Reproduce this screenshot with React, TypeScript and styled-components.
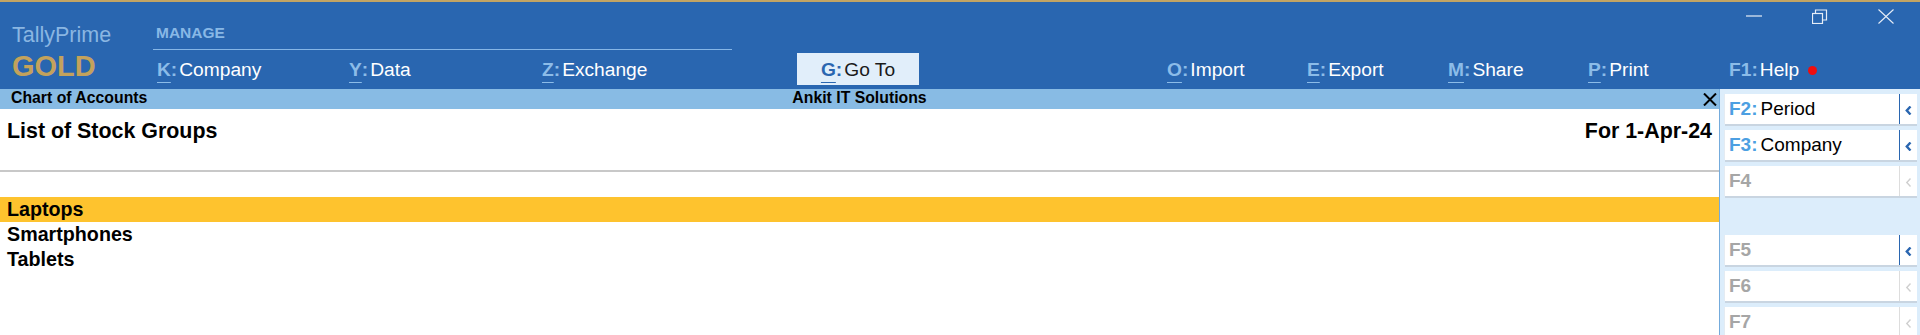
import { FunctionComponent } from "react";
import styled, { createGlobalStyle } from "styled-components";

const GlobalStyle = createGlobalStyle`
    html, body {
        margin: 0;
        padding: 0;
        background: #ffffff;
        font-family: "Liberation Sans", Arial, sans-serif;
    }
`;

const Frame = styled.div`
    width: 1920px;
    height: 335px;
    border-top: 2px solid #c2a463;
    box-sizing: border-box;
    display: flex;
    flex-direction: column;
    overflow: hidden;
`;

// ---- header ----

const Header = styled.div`
    height: 87px;
    background: #2966b0;
    display: flex;
    flex-shrink: 0;
`;

const Logo = styled.div`
    width: 153px;
    padding: 21px 0 0 12px;
    box-sizing: border-box;
    display: flex;
    flex-direction: column;
`;

const LogoName = styled.div`
    font-size: 21.5px;
    line-height: 25px;
    color: #8ab6e2;
`;

const LogoEdition = styled.div`
    margin-top: 1.5px;
    font-size: 29px;
    line-height: 33px;
    font-weight: bold;
    color: #c3a25c;
`;

const MenuArea = styled.div`
    flex: 1;
    display: flex;
    flex-direction: column;
`;

const TopRow = styled.div`
    height: 48px;
    display: flex;
    justify-content: space-between;
`;

const ManageGroup = styled.div`
    width: 579px;
    height: 48px;
    box-sizing: border-box;
    border-bottom: 1px solid #86b6e6;
    padding: 22px 0 0 3px;
    font-size: 15.5px;
    line-height: 18px;
    font-weight: bold;
    color: #88b8e6;
`;

const WindowControls = styled.div`
    display: flex;
    margin-right: 1px;
`;

const WinButton = styled.div`
    width: 66px;
    height: 28px;
    display: flex;
    align-items: center;
    justify-content: center;
`;

const MenuRow = styled.div`
    height: 39px;
    padding: 3px 0 0 4px;
    box-sizing: border-box;
    display: flex;
    align-items: flex-start;
`;

const MenuItem = styled.div<{ $w: number }>`
    width: ${(p) => p.$w}px;
    height: 32px;
    display: flex;
    align-items: center;
    font-size: 19.2px;
    line-height: 33px;
    color: #ffffff;
    flex-shrink: 0;
`;

const GoToButton = styled.div`
    width: 122px;
    height: 32px;
    margin-right: 248px;
    background: #e1eefa;
    display: flex;
    align-items: center;
    justify-content: center;
    font-size: 19.2px;
    line-height: 33px;
    color: #1a1a1a;
    flex-shrink: 0;
`;

const Key = styled.span<{ $dark?: boolean; $plain?: boolean }>`
    font-weight: bold;
    color: ${(p) => (p.$dark ? "#2a66b0" : "#8cbce8")};
    text-decoration: ${(p) => (p.$plain ? "none" : "underline")};
    text-underline-offset: 6px;
    text-decoration-thickness: 1px;
`;

const Colon = styled.span<{ $dark?: boolean }>`
    font-weight: bold;
    color: ${(p) => (p.$dark ? "#2a66b0" : "#8cbce8")};
    margin-right: 2px;
`;

const Dot = styled.span`
    width: 9px;
    height: 9px;
    border-radius: 50%;
    background: #f00d0d;
    margin-left: 9px;
    margin-top: 2px;
`;

// ---- body ----

const Body = styled.div`
    flex: 1;
    display: flex;
`;

const Main = styled.div`
    width: 1719px;
    display: flex;
    flex-direction: column;
`;

const Strip = styled.div`
    height: 20px;
    background: #88bbe4;
    display: grid;
    grid-template-columns: 1fr auto 1fr;
    align-items: start;
    font-size: 15.8px;
    line-height: 18px;
    font-weight: bold;
    color: #000;
`;

const StripLeft = styled.div`
    padding-left: 11px;
`;

const StripClose = styled.div`
    justify-self: end;
    padding: 4px 2px 0 0;
    display: flex;
`;

const TitleRow = styled.div`
    height: 63px;
    padding: 10px 7px 0 7px;
    box-sizing: border-box;
    display: flex;
    justify-content: space-between;
    font-size: 21.4px;
    line-height: 24px;
    font-weight: bold;
    color: #000;
    border-bottom: 2px solid #c8c8c8;
`;

const List = styled.div`
    padding-top: 25px;
`;

const Row = styled.div<{ $active?: boolean }>`
    height: 25px;
    padding-left: 7px;
    font-size: 19.7px;
    line-height: 25px;
    font-weight: bold;
    color: #000;
    background: ${(p) => (p.$active ? "#fec32e" : "transparent")};
`;

const SidePanel = styled.div`
    width: 201px;
    border-left: 1px solid #74abdc;
    background: #dcedfb;
    box-sizing: border-box;
    padding: 5px 3px 0 5px;
    display: flex;
    flex-direction: column;
`;

const SideButton = styled.div`
    height: 30px;
    margin-bottom: 6px;
    background: #ffffff;
    box-shadow: 0 2px 0 #c9d5e1, -1px 0 0 #e4ebf2;
    display: flex;
    align-items: stretch;
`;

const SideLabel = styled.div`
    flex: 1;
    padding-left: 4px;
    font-size: 19px;
    line-height: 30px;
    color: #000;
`;

const FKey = styled.span<{ $off?: boolean }>`
    font-weight: bold;
    color: ${(p) => (p.$off ? "#a6a6a6" : "#4c9fe2")};
`;

const FText = styled.span`
    margin-left: 3px;
`;

const Chevron = styled.div<{ $off?: boolean }>`
    width: 18px;
    border-left: 1px solid ${(p) => (p.$off ? "#dddddd" : "#2a66b0")};
    display: flex;
    align-items: center;
    justify-content: center;
    padding-top: 3px;
    box-sizing: border-box;
`;

const SideSpacer = styled.div`
    height: 33px;
`;

const menu = [
    { k: "K", label: "Company", w: 192 },
    { k: "Y", label: "Data", w: 193 },
    { k: "Z", label: "Exchange", w: 255 },
];

const menuRight = [
    { k: "O", label: "Import", w: 140 },
    { k: "E", label: "Export", w: 141 },
    { k: "M", label: "Share", w: 140 },
    { k: "P", label: "Print", w: 141 },
];

const side = [
    { k: "F2", label: "Period" },
    { k: "F3", label: "Company" },
    { k: "F4", off: true },
    null,
    { k: "F5", off: true, activeChevron: true },
    { k: "F6", off: true },
    { k: "F7", off: true },
];

const ChevronIcon = ({ off }: { off?: boolean }) => (
    <svg width="7" height="9" viewBox="0 0 7 9">
        <polyline points="5.5,0.5 1.8,4.5 5.5,8.5" fill="none" stroke={off ? "#cfcfcf" : "#2a66b0"} strokeWidth={off ? 1.4 : 2.4} />
    </svg>
);

export const App: FunctionComponent = () => {
    return (
        <Frame>
            <GlobalStyle />
            <Header>
                <Logo>
                    <LogoName>TallyPrime</LogoName>
                    <LogoEdition>GOLD</LogoEdition>
                </Logo>
                <MenuArea>
                    <TopRow>
                        <ManageGroup>MANAGE</ManageGroup>
                        <WindowControls>
                            <WinButton>
                                <svg width="16" height="2" viewBox="0 0 16 2">
                                    <line x1="0" y1="1" x2="16" y2="1" stroke="#e6edf7" strokeWidth="1.2" />
                                </svg>
                            </WinButton>
                            <WinButton>
                                <svg width="16" height="15" viewBox="0 0 16 15">
                                    <rect x="0.5" y="4.5" width="10" height="10" fill="none" stroke="#e6edf7" strokeWidth="1.2" />
                                    <path d="M3.5 4.5 V1 H14.5 V11 H10.5" fill="none" stroke="#e6edf7" strokeWidth="1.2" />
                                </svg>
                            </WinButton>
                            <WinButton>
                                <svg width="16" height="15" viewBox="0 0 16 15">
                                    <path d="M0.5 0.5 L15.5 14.5 M15.5 0.5 L0.5 14.5" fill="none" stroke="#e6edf7" strokeWidth="1.1" />
                                </svg>
                            </WinButton>
                        </WindowControls>
                    </TopRow>
                    <MenuRow>
                        {menu.map((m) => (
                            <MenuItem key={m.k} $w={m.w}>
                                <Key>{m.k}</Key>
                                <Colon>:</Colon>
                                {m.label}
                            </MenuItem>
                        ))}
                        <GoToButton>
                            <Key $dark>G</Key>
                            <Colon $dark>:</Colon>
                            Go To
                        </GoToButton>
                        {menuRight.map((m) => (
                            <MenuItem key={m.k} $w={m.w}>
                                <Key>{m.k}</Key>
                                <Colon>:</Colon>
                                {m.label}
                            </MenuItem>
                        ))}
                        <MenuItem $w={180}>
                            <Key $plain>F1</Key>
                            <Colon>:</Colon>
                            Help
                            <Dot />
                        </MenuItem>
                    </MenuRow>
                </MenuArea>
            </Header>
            <Body>
                <Main>
                    <Strip>
                        <StripLeft>Chart of Accounts</StripLeft>
                        <div>Ankit IT Solutions</div>
                        <StripClose>
                            <svg width="14" height="13" viewBox="0 0 14 13">
                                <path d="M1 0.5 L13 12.5 M13 0.5 L1 12.5" stroke="#000" strokeWidth="2" fill="none" />
                            </svg>
                        </StripClose>
                    </Strip>
                    <TitleRow>
                        <div>List of Stock Groups</div>
                        <div>For 1-Apr-24</div>
                    </TitleRow>
                    <List>
                        <Row $active>Laptops</Row>
                        <Row>Smartphones</Row>
                        <Row>Tablets</Row>
                    </List>
                </Main>
                <SidePanel>
                    {side.map((s, i) =>
                        s === null ? (
                            <SideSpacer key={i} />
                        ) : (
                            <SideButton key={s.k}>
                                <SideLabel>
                                    <FKey $off={s.off}>
                                        {s.k}
                                        {s.label ? ":" : ""}
                                    </FKey>
                                    {s.label && <FText>{s.label}</FText>}
                                </SideLabel>
                                <Chevron $off={s.off && !s.activeChevron}>
                                    <ChevronIcon off={s.off && !s.activeChevron} />
                                </Chevron>
                            </SideButton>
                        )
                    )}
                </SidePanel>
            </Body>
        </Frame>
    );
};

export default App;
